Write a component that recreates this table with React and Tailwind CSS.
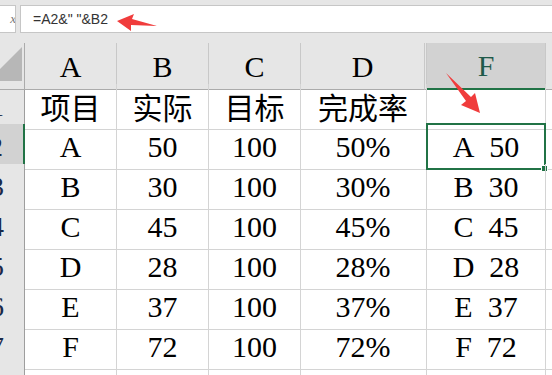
import React from 'react';

const rows = [
  ['项目', '实际', '目标', '完成率', ''],
  ['A', '50', '100', '50%', 'A\u00a0\u00a050'],
  ['B', '30', '100', '30%', 'B\u00a0\u00a030'],
  ['C', '45', '100', '45%', 'C\u00a0\u00a045'],
  ['D', '28', '100', '28%', 'D\u00a0\u00a028'],
  ['E', '37', '100', '37%', 'E\u00a0\u00a037'],
  ['F', '72', '100', '72%', 'F\u00a0\u00a072'],
  ['', '', '', '', '']
];

const Cell = ({ text, cls }) => {
  const isCjk = /[\u4e00-\u9fff]/.test(text);
  return (
    <div
      className={`flex items-center justify-center text-[30px] text-black whitespace-nowrap ${
        isCjk ? "font-['Noto_Sans_CJK_SC',sans-serif]" : "font-['Liberation_Serif',serif]"
      } ${cls}`}
    >
      {text}
    </div>
  );
};

const App = () => {
  return (
    <div className="relative w-[552px] h-[375px] overflow-hidden bg-white font-['Liberation_Serif',serif]">
      {/* formula bar */}
      <div className="h-[43px] bg-[#e6e6e6] pt-[5px] flex gap-[4px]">
        <div className="w-[16px] h-[28px] bg-white border border-l-0 border-[#c6c6c6] overflow-hidden flex items-center justify-end">
          <span className="text-[13px] text-[#777] italic -mr-[1px]">x</span>
        </div>
        <div className="flex-1 h-[28px] bg-white border border-r-0 border-[#c6c6c6] flex items-center pl-[12px]">
          <span className="text-[14px] text-[#333] whitespace-pre font-['Liberation_Sans',Arial,sans-serif]">=A2&amp;" "&amp;B2</span>
        </div>
      </div>

      {/* column headers */}
      <div className="grid grid-cols-[25px_92px_92px_92px_124px_2px_119px_1fr] h-[41px]">
        <div className="relative bg-[#e6e6e6] border-r border-b border-[#ababab] overflow-hidden">
          <svg className="absolute left-0 top-0" width="25" height="41">
            <polygon points="22,4 22,38 0,38 0,26" fill="#b7b7b7" />
          </svg>
        </div>
        {['A', 'B', 'C', 'D'].map(c => (
          <Cell key={c} text={c} cls="bg-[#e6e6e6] border-r border-r-[#c8c8c8] border-b border-b-[#ababab]" />
        ))}
        <div className="bg-[#e6e6e6] border-r border-r-[#c8c8c8] border-b border-b-[#ababab]" />
        <div className="bg-[#d2d2d2] border-r border-r-[#c8c8c8] border-b-2 border-b-[#217346] flex items-center justify-center text-[30px] text-[#1f5a4a]">
          F
        </div>
        <div className="bg-[#e6e6e6] border-b border-[#ababab]" />
      </div>

      {/* data rows */}
      {rows.map((r, i) => {
        const sel = i === 1;
        return (
          <div key={i} className="grid grid-cols-[25px_92px_92px_92px_124px_2px_119px_1fr] h-[40px]">
            <div className={`overflow-hidden flex items-center justify-end pr-[20px] text-[28px] text-[#1a2a4a] border-b border-b-[#9e9e9e] ${sel ? 'bg-[#d2d2d2] border-r-2 border-r-[#217346]' : 'bg-[#e6e6e6] border-r border-r-[#9e9e9e]'}`}>
              {i + 1}
            </div>
            {r.slice(0, 3).map((t, j) => (
              <Cell key={j} text={t} cls="border-r border-b border-[#d4d4d4]" />
            ))}
            <Cell text={r[3]} cls="border-b border-[#d4d4d4]" />
            <div className="border-r border-b border-[#d4d4d4]" />
            <div className="relative border-r border-b border-[#d4d4d4]">
              <Cell text={r[4]} cls="h-full" />
              {sel && (
                <>
                  <div className="absolute -left-[1px] -top-[1px] -right-[1px] -bottom-[1px] border-2 border-[#217346]" />
                  <div className="absolute -right-[3px] -bottom-[3px] w-[5px] h-[5px] bg-[#217346] border border-white box-content" />
                </>
              )}
            </div>
            <div className="border-b border-[#d4d4d4]" />
          </div>
        );
      })}

      {/* annotation arrows */}
      <svg className="absolute left-0 top-0 pointer-events-none" width="552" height="375">
        <polygon points="117,21 134,14 132,19 157,26 131,25 131,31" fill="#f03c3c" />
        <polygon points="480,113 461,105 466,101 446,73 471,97 475,93" fill="#f03c3c" />
      </svg>
    </div>
  );
};

export default App;
